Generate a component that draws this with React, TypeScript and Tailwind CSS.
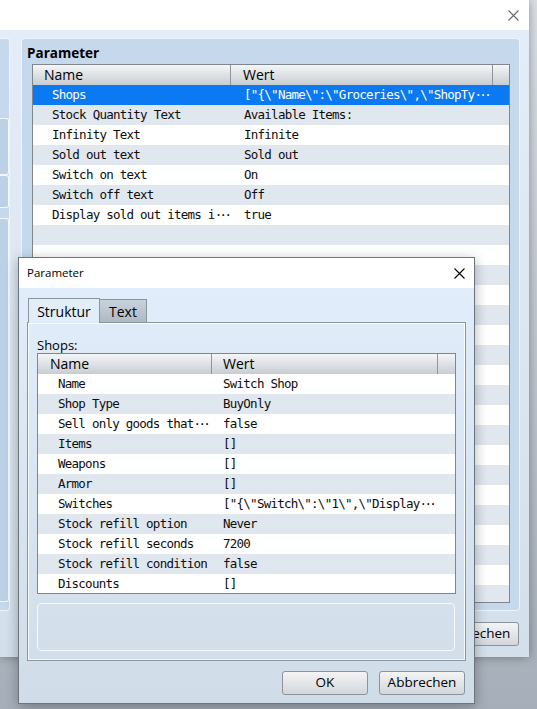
import React from 'react';

type Row = [string, string];

const sans = "font-['Open_Sans',sans-serif]";
const mono = "font-['DejaVu_Sans_Mono',monospace]";

// a trailing '~' marks a value cut short by the column
const pluginRows: Row[] = [
  ['Shops', '["{\\"Name\\":\\"Groceries\\",\\"ShopTy~'],
  ['Stock Quantity Text', 'Available Items:'],
  ['Infinity Text', 'Infinite'],
  ['Sold out text', 'Sold out'],
  ['Switch on text', 'On'],
  ['Switch off text', 'Off'],
  ['Display sold out items i~', 'true'],
];

const shopRows: Row[] = [
  ['Name', 'Switch Shop'],
  ['Shop Type', 'BuyOnly'],
  ['Sell only goods that~', 'false'],
  ['Items', '[]'],
  ['Weapons', '[]'],
  ['Armor', '[]'],
  ['Switches', '["{\\"Switch\\":\\"1\\",\\"Display~'],
  ['Stock refill option', 'Never'],
  ['Stock refill seconds', '7200'],
  ['Stock refill condition', 'false'],
  ['Discounts', '[]'],
];

function Cell({ text }: { text: string }) {
  if (!text.endsWith('~')) return <>{text}</>;
  return (
    <>
      {text.slice(0, -1)}
      <span className="tracking-[-2.6px]">{'\u00B7\u00B7\u00B7'}</span>
    </>
  );
}

function CloseIcon({ className }: { className?: string }) {
  return (
    <svg width="11" height="11" viewBox="0 0 11 11" className={className}>
      <path d="M0.5 0.5L10.5 10.5M10.5 0.5L0.5 10.5" stroke="currentColor" strokeWidth="1.1" fill="none" />
    </svg>
  );
}

function WinButton({ label }: { label: string }) {
  return (
    <button
      className={`${sans} h-[24px] w-[86px] rounded-[3px] border border-[#8b939c] bg-linear-to-b from-[#f4f4f4] to-[#d2d7dd] text-[13.5px] leading-none text-black`}
    >
      {label}
    </button>
  );
}

interface TableProps {
  rows: Row[];
  fill: number;
  nameWidth: string;
  valueWidth: string;
  headNamePad: string;
  headValuePad: string;
  namePad: string;
  valuePad: string;
  selected?: number;
}

function PropTable({ rows, fill, nameWidth, valueWidth, headNamePad, headValuePad, namePad, valuePad, selected }: TableProps) {
  const all: Row[] = [...rows];
  while (all.length < fill) all.push(['', '']);

  return (
    <div className="flex min-h-0 flex-1 flex-col overflow-hidden border border-[#80868e] bg-white">
      <div className={`${sans} flex h-[20px] shrink-0 bg-linear-to-b from-[#f5f6f7] to-[#c8cdd3] text-[14px] leading-[20px] text-black`}>
        <div className={`${nameWidth} ${headNamePad} border-r border-[#8f959c]`}>Name</div>
        <div className={`${valueWidth} ${headValuePad} border-r border-[#8f959c]`}>Wert</div>
        <div className="flex-1" />
      </div>
      <div className="min-h-0 flex-1 overflow-hidden">
        {all.map(([name, value], i) => {
          const sel = i === selected;
          const stripe = sel ? 'bg-[#0b7af2] text-white' : i % 2 === 1 ? 'bg-[#e1e7ef] text-[#0d0d0d]' : 'bg-white text-[#0d0d0d]';
          return (
            <div key={i} className={`${mono} ${stripe} flex h-[20px] text-[12.5px] leading-[20px] tracking-[-0.75px] whitespace-nowrap`}>
              <div className={`${nameWidth} ${namePad} overflow-hidden`}>
                <Cell text={name} />
              </div>
              <div className={`flex-1 ${valuePad} overflow-hidden`}>
                <Cell text={value} />
              </div>
            </div>
          );
        })}
      </div>
    </div>
  );
}

function PluginWindow() {
  return (
    <div className="absolute left-0 top-0 flex h-[657px] w-[529px] flex-col bg-linear-to-b from-[#e4eefa] to-[#d3dfeb] shadow-[0_0_10px_rgba(0,0,0,0.35)]">
      <div className="flex h-[30px] shrink-0 items-center justify-end bg-white pr-[10px]">
        <CloseIcon className="text-[#6b6b6b]" />
      </div>

      <div className="flex flex-1 flex-col pr-[9px] pt-[8px] pb-[11px]">
        <div className="flex h-[573px] gap-[11px]">
          {/* plugin list, mostly scrolled off to the left */}
          <div className="flex w-[10px] flex-col rounded-r-[4px] border border-l-0 border-[#eef4fb] bg-[#c6d8ec] pt-[79px] pb-[8px]">
            <div className="h-[57px] rounded-r-[3px] border border-l-0 border-[#f2f7fc] bg-[#bcd0e6]" />
            <div className="h-[33px] rounded-r-[3px] border border-l-0 border-[#f2f7fc] bg-[#bcd0e6]" />
            <div className="mt-[10px] flex-1 rounded-r-[3px] border border-l-0 border-[#f2f7fc] bg-[#bcd0e6]" />
          </div>

          <div className="flex w-[499px] flex-col rounded-[4px] border border-[#eef4fb] bg-[#c6d8ec] pl-[10px] pr-[9px] pt-[4px] pb-[7px]">
            <div className={`${sans} -ml-[5px] h-[21px] shrink-0 text-[13.5px] font-bold leading-[21px] text-black`}>Parameter</div>
            <PropTable
              rows={pluginRows}
              fill={26}
              nameWidth="w-[198px]"
              valueWidth="w-[262px]"
              headNamePad="pl-[11px]"
              headValuePad="pl-[12px]"
              namePad="pl-[19px]"
              valuePad="pl-[13px]"
              selected={0}
            />
          </div>
        </div>

        <div className="mt-[11px] flex justify-end gap-[11px] pr-px">
          <WinButton label="OK" />
          <WinButton label="Abbrechen" />
        </div>
      </div>
    </div>
  );
}

function ShopDialog() {
  return (
    <div className="absolute left-[18px] top-[257px] flex h-[447px] w-[457px] flex-col border border-[#6c747d] bg-linear-to-b from-[#e3eefc] to-[#d0dce8] shadow-[0_3px_12px_rgba(0,0,0,0.3)]">
      <div className="flex h-[30px] shrink-0 items-center justify-between bg-white pl-[8px] pr-[9px]">
        <span className={`${sans} text-[11.5px] text-black`}>Parameter</span>
        <CloseIcon className="text-black" />
      </div>

      <div className="flex flex-1 flex-col pl-[8px] pr-[8px] pt-[10px] pb-[8px]">
        <div className={`${sans} flex h-[24px] shrink-0 items-end pl-px text-[14px] text-black`}>
          <div className="relative z-10 -mb-px flex h-[25px] w-[72px] items-center justify-center border border-b-0 border-[#8c949c] bg-[#e2edfa]">
            Struktur
          </div>
          <div className="flex h-[23px] w-[47px] items-center justify-center border border-l-0 border-b-0 border-[#8c949c] bg-linear-to-b from-[#c9d2dc] to-[#aeb9c5]">
            Text
          </div>
        </div>

        <div className="flex h-[339px] flex-col border border-[#8c949c] px-[9px] pt-[14px] pb-[9px] shadow-[inset_0_0_0_1px_rgba(255,255,255,0.8)]">
          <div className={`${sans} h-[16px] shrink-0 text-[13px] leading-[16px] text-black`}>Shops:</div>
          <div className="flex h-[241px] shrink-0">
            <PropTable
              rows={shopRows}
              fill={11}
              nameWidth="w-[174px]"
              valueWidth="w-[226px]"
              headNamePad="pl-[12px]"
              headValuePad="pl-[11px]"
              namePad="pl-[20px]"
              valuePad="pl-[11px]"
            />
          </div>
          {/* help text box */}
          <div className="mt-[9px] mr-px flex-1 rounded-[4px] border border-[#f6f9fd]" />
        </div>

        <div className="mt-[10px] flex justify-end gap-[11px] pr-[1px]">
          <WinButton label="OK" />
          <WinButton label="Abbrechen" />
        </div>
      </div>
    </div>
  );
}

export default function App() {
  return (
    <div className="relative h-[709px] w-[537px] overflow-hidden bg-linear-to-b from-[#dde1e6] to-[#a6aeb9]">
      <PluginWindow />
      <ShopDialog />
    </div>
  );
}
